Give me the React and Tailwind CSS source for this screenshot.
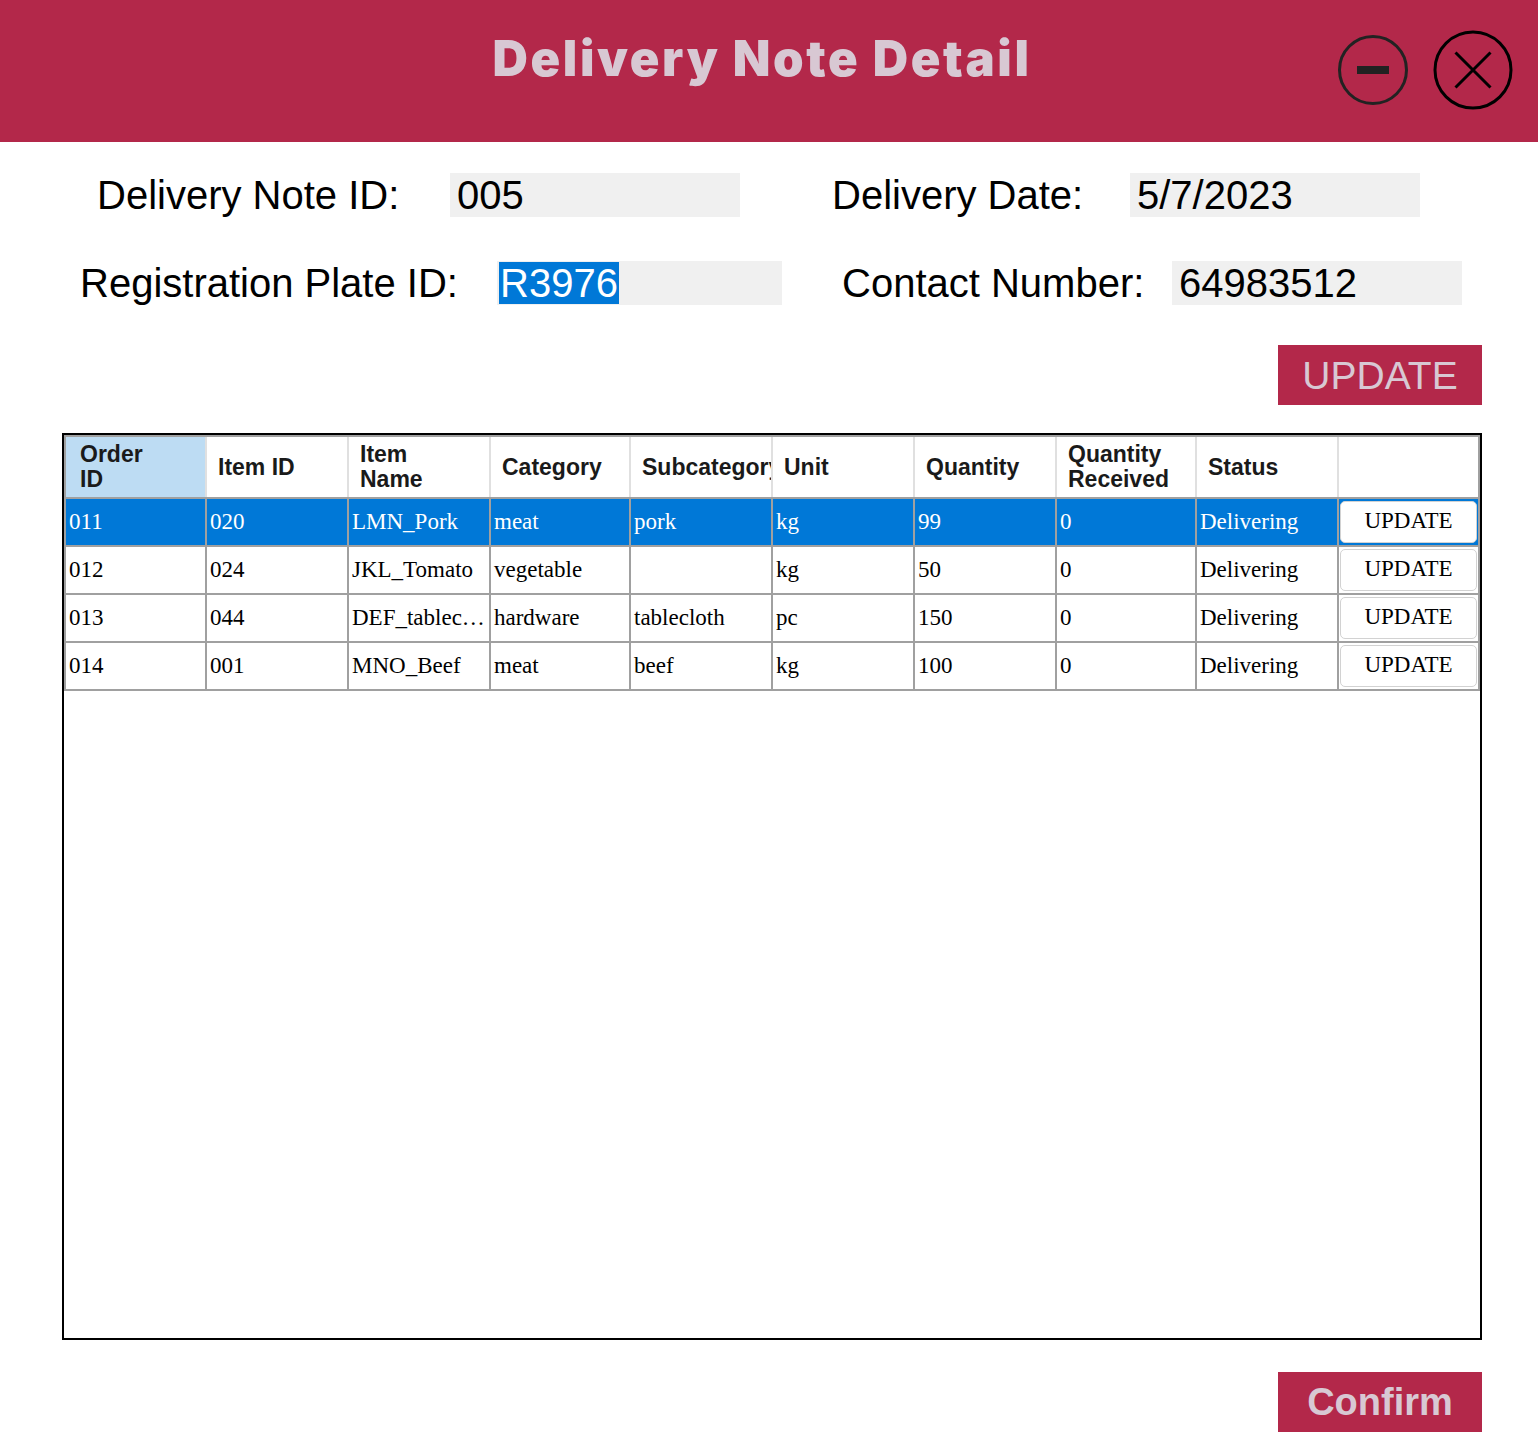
import React from "react"

const columns = [
  { label: ["Order", "ID"], w: "w-[141px]", first: true },
  { label: ["Item ID"], w: "w-[142px]" },
  { label: ["Item", "Name"], w: "w-[142px]" },
  { label: ["Category"], w: "w-[140px]" },
  { label: ["Subcategory"], w: "w-[142px]" },
  { label: ["Unit"], w: "w-[142px]" },
  { label: ["Quantity"], w: "w-[142px]" },
  { label: ["Quantity", "Received"], w: "w-[140px]" },
  { label: ["Status"], w: "w-[142px]" },
]

const rows = [
  ["011", "020", "LMN_Pork", "meat", "pork", "kg", "99", "0", "Delivering"],
  ["012", "024", "JKL_Tomato", "vegetable", "", "kg", "50", "0", "Delivering"],
  ["013", "044", "DEF_tablec…", "hardware", "tablecloth", "pc", "150", "0", "Delivering"],
  ["014", "001", "MNO_Beef", "meat", "beef", "kg", "100", "0", "Delivering"],
]

const sans = "font-['Liberation_Sans',Arial,sans-serif]"
const serif = "font-['Liberation_Serif','Times_New_Roman',serif]"

const MinusIcon = () => (
  <svg width="72" height="72" viewBox="0 0 72 72" fill="none">
    <circle cx="36" cy="36" r="33.5" stroke="#222" strokeWidth="3" />
    <rect x="20" y="32" width="32" height="8" fill="#222" />
  </svg>
)

const CloseIcon = () => (
  <svg width="80" height="80" viewBox="0 0 80 80" fill="none">
    <circle cx="40" cy="40" r="38" stroke="#000" strokeWidth="3" />
    <path d="M22.5 22.5L57.5 57.5M57.5 22.5L22.5 57.5" stroke="#000" strokeWidth="3" />
  </svg>
)

const Field = ({ label, value, labelW, boxW, selected }) => (
  <div className="flex items-center">
    <div className={`${labelW} text-[40px] leading-[44px] text-black whitespace-nowrap`}>{label}</div>
    <div className={`${boxW} h-[44px] bg-[#f0f0f0] text-[40px] leading-[44px] ${selected ? "pl-[2px]" : "pl-[7px]"}`}>
      {selected ? (
        <span className="inline-block bg-[#0078d7] text-white px-[1px] h-[42px] mt-[1px] leading-[42px]">{value}</span>
      ) : (
        value
      )}
    </div>
  </div>
)

export default function App() {
  return (
    <div className={`w-[1538px] h-[1446px] bg-white ${sans}`}>
      {/* title bar */}
      <div className="grid grid-cols-[1fr_auto_1fr] h-[142px] bg-[#b3284a]">
        <div></div>
        <h1 className="pt-[34px] pr-[14px] text-[49px] leading-none font-black tracking-[2.6px] text-[#d8c8d3] font-['Inter','DejaVu_Sans',sans-serif]">
          Delivery Note Detail
        </h1>
        <div className="flex items-center justify-end gap-[24px] pr-[25px] pb-[3px]">
          <MinusIcon />
          <CloseIcon />
        </div>
      </div>

      {/* header fields */}
      <div className="pt-[31px] flex flex-col gap-[44px]">
        <div className="flex pl-[97px]">
          <Field label="Delivery Note ID:" value="005" labelW="w-[353px]" boxW="w-[290px]" />
          <div className="w-[92px]"></div>
          <Field label="Delivery Date:" value="5/7/2023" labelW="w-[298px]" boxW="w-[290px]" />
        </div>
        <div className="flex pl-[80px]">
          <Field label="Registration Plate ID:" value="R3976" labelW="w-[417px]" boxW="w-[285px]" selected />
          <div className="w-[60px]"></div>
          <Field label="Contact Number:" value="64983512" labelW="w-[330px]" boxW="w-[290px]" />
        </div>
      </div>

      <div className="flex justify-end pr-[56px] mt-[40px]">
        <button className="w-[204px] h-[60px] bg-[#b3284a] text-[#d8c8d3] text-[39px] leading-none">UPDATE</button>
      </div>

      {/* table */}
      <div className="ml-[62px] w-[1420px] mt-[28px] h-[907px] border-2 border-black bg-white">
        <div className="border-t-2 border-x-2 border-[#a0a0a0]">
          <div className="flex h-[62px] border-b-2 border-[#a0a0a0]">
            {columns.map((c, i) => (
              <div
                key={i}
                className={`${c.w} shrink-0 flex flex-col justify-center border-r-2 border-[#e0e0e0] overflow-hidden whitespace-nowrap text-[23px] leading-[25px] font-bold text-[#1a1a1a] ${
                  c.first ? "bg-[#bddcf3] pl-[14px]" : "pl-[11px]"
                }`}
              >
                {c.label.map((l) => (
                  <span key={l}>{l}</span>
                ))}
              </div>
            ))}
            <div className="flex-1"></div>
          </div>
          {rows.map((r, ri) => (
            <div
              key={ri}
              className={`flex h-[48px] border-b-2 border-[#a0a0a0] ${serif} text-[23px] ${
                ri === 0 ? "bg-[#0078d7] text-white" : "text-black"
              }`}
            >
              {r.map((v, ci) => (
                <div
                  key={ci}
                  className={`${columns[ci].w} shrink-0 flex items-center pl-[3px] border-r-2 border-[#a0a0a0] overflow-hidden whitespace-nowrap`}
                >
                  {v}
                </div>
              ))}
              <div className="flex-1 flex items-center px-[1px]">
                <button className="w-full h-[42px] bg-white border border-[#d2d2d2] rounded-[5px] text-black text-[23px] leading-none pb-[3px]">
                  UPDATE
                </button>
              </div>
            </div>
          ))}
        </div>
      </div>

      <div className="flex justify-end pr-[56px] mt-[32px]">
        <button className="w-[204px] h-[60px] bg-[#b3284a] text-[#d8c8d3] text-[38px] leading-none font-bold">Confirm</button>
      </div>
    </div>
  )
}
